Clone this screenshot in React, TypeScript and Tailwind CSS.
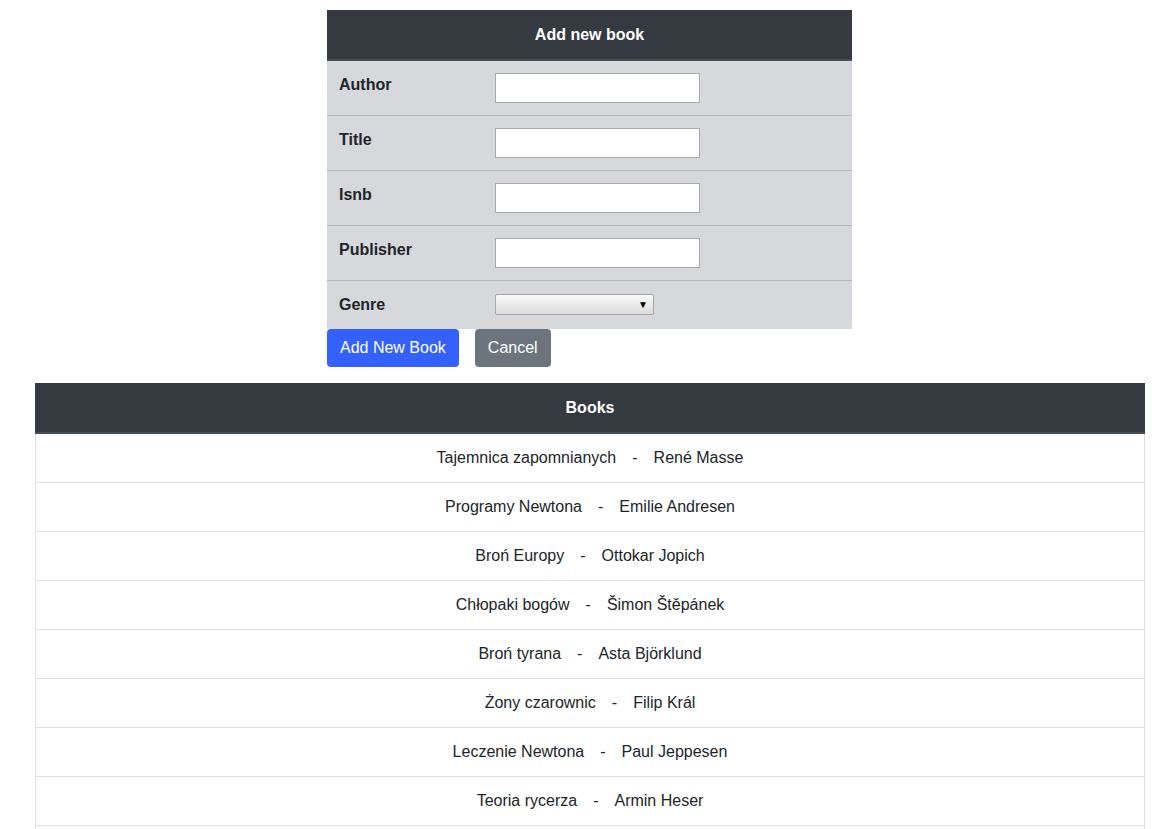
import React from 'react'

const fields = ['Author', 'Title', 'Isnb', 'Publisher']

const books = [
  ['Tajemnica zapomnianych', 'René Masse'],
  ['Programy Newtona', 'Emilie Andresen'],
  ['Broń Europy', 'Ottokar Jopich'],
  ['Chłopaki bogów', 'Šimon Štěpánek'],
  ['Broń tyrana', 'Asta Björklund'],
  ['Żony czarownic', 'Filip Král'],
  ['Leczenie Newtona', 'Paul Jeppesen'],
  ['Teoria rycerza', 'Armin Heser'],
  ['Miasto cieni', 'Jan Novák'],
]

const App = () => {
  return (
    <div className="min-h-screen bg-white pt-[10px] text-[16px] leading-6 text-[#212529] [font-family:'Liberation_Sans',Arial,sans-serif]">
      <div className="ml-[327px] w-[525px]">
        <div className="border-b-2 border-[#454d55] bg-[#343a40] px-3 pt-[13px] pb-3 text-center font-bold text-white">
          Add new book
        </div>
        {fields.map((f, i) => (
          <div
            key={f}
            className={`flex bg-[#d6d8db] ${i > 0 ? 'border-t border-[#b3b7bb]' : ''}`}
          >
            <div className="w-[156px] p-3 font-bold">{f}</div>
            <div className="p-3">
              <input
                type="text"
                className="block h-[30px] w-[205px] border border-[#a9a9a9] bg-white px-1 outline-none"
              />
            </div>
          </div>
        ))}
        <div className="flex border-t border-[#b3b7bb] bg-[#d6d8db]">
          <div className="w-[156px] p-3 font-bold">Genre</div>
          <div className="px-3 pt-[13px] pb-3">
            <div className="flex h-[21px] w-[159px] items-center justify-end rounded-[2px] border border-[#a6a6a6] bg-gradient-to-b from-[#fafafa] to-[#dcdcdc] pr-[5px] text-[10px] leading-none text-black">
              ▼
            </div>
          </div>
        </div>
        <div className="flex gap-4">
          <button className="h-[38px] rounded bg-[#3461fc] px-[13px] text-white">Add New Book</button>
          <button className="h-[38px] rounded bg-[#6c757d] px-[13px] text-white">Cancel</button>
        </div>
      </div>

      <div className="ml-[35px] mt-4 w-[1110px] border-x border-[#dee2e6]">
        <div className="-mx-px border-b-2 border-[#454d55] bg-[#343a40] px-3 pt-[13px] pb-3 text-center font-bold text-white">
          Books
        </div>
        {books.map(([title, author], i) => (
          <div
            key={title}
            className={`p-3 text-center ${i > 0 ? 'border-t border-[#dee2e6]' : ''}`}
          >
            {title}
            <span className="mx-4">-</span>
            {author}
          </div>
        ))}
      </div>
    </div>
  )
}

export default App
